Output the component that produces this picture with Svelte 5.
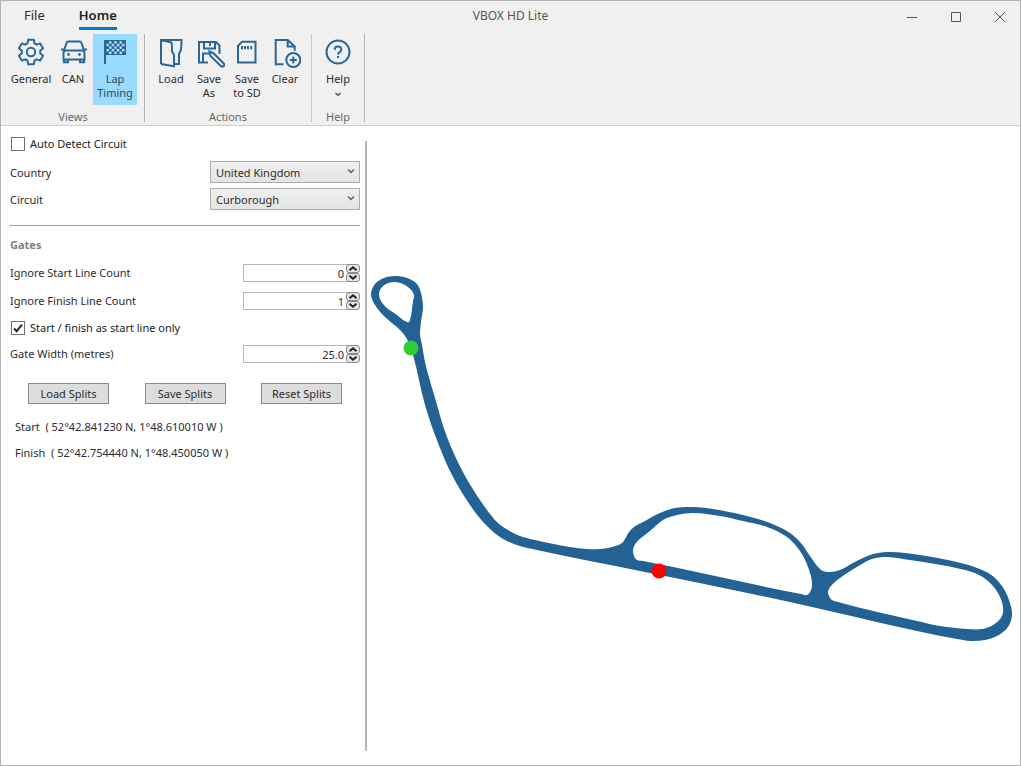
<script>
  let autoDetect = $state(false);
  let startOnly = $state(true);
  let country = $state('United Kingdom');
  let circuit = $state('Curborough');
  let ignoreStart = $state('0');
  let ignoreFinish = $state('1');
  let gateWidth = $state('25.0');
  let activeView = $state('lap');

  const start = { x: 411, y: 348, label: '52°42.841230 N, 1°48.610010 W' };
  const finish = { x: 659, y: 571, label: '52°42.754440 N, 1°48.450050 W' };

  const outer = [
    [371, 294], [375, 284], [384, 278], [395, 276], [407, 278], [417, 284], [421, 293], [423, 307],
    [421, 322], [420, 334], [422, 345], [425, 362], [435, 398], [447, 437], [464, 474], [482, 503],
    [490, 514], [498, 523], [508, 530], [520, 536], [535, 540], [570, 547], [587, 549], [600, 549],
    [612, 547], [622, 543], [625, 539], [629, 532], [634, 527], [643, 522], [660, 513], [675, 508],
    [693, 507], [713, 509], [743, 515], [770, 523], [790, 533], [800, 542], [810, 556], [819, 568],
    [823, 571], [830, 572], [840, 570], [853, 563], [870, 555], [878, 553], [889, 552], [905, 553],
    [965, 564], [977, 568], [990, 574], [1002, 586], [1009, 600], [1012, 615], [1008, 627], [997, 636],
    [985, 640], [971, 641], [957, 639], [917, 631], [790, 602], [640, 571], [537, 550], [520, 546],
    [503, 539], [489, 528], [478, 516], [468, 502], [452, 475], [438, 443], [425, 405], [413, 355],
    [408, 341], [401, 331], [385, 317], [375, 305]
  ];

  const loops = [
    [
      [379, 294], [383, 286], [395, 282], [408, 287], [414, 295], [413, 301], [410, 320], [409, 322],
      [407, 322], [397, 315], [383, 304]
    ],
    [
      [637, 560], [634, 556], [633, 550], [636, 543], [650, 531], [663, 520], [677, 515], [693, 513],
      [720, 516], [743, 521], [767, 527], [787, 537], [800, 551], [808, 567], [812, 583], [811, 590],
      [807, 595], [801, 594], [643, 561]
    ],
    [
      [832, 600], [829, 596], [828, 592], [831, 586], [840, 578], [857, 567], [872, 559], [887, 557],
      [903, 559], [965, 570], [977, 574], [988, 581], [998, 593], [1003, 607], [1002, 616], [993, 625],
      [982, 629], [967, 629], [940, 626], [917, 621], [838, 602]
    ]
  ];

  function unit(a, b) {
    const len = Math.hypot(b[0] - a[0], b[1] - a[1]);
    return [(b[0] - a[0]) / len, (b[1] - a[1]) / len];
  }

  // closed curve through all points, handles bisect the two neighbouring chords
  function smooth(points) {
    const n = points.length;
    const dir = points.map((p, i) => {
      const u = unit(points[(i + n - 1) % n], p);
      const v = unit(p, points[(i + 1) % n]);
      return unit([0, 0], [u[0] + v[0], u[1] + v[1]]);
    });
    let d = `M${points[0]}`;
    points.forEach((p, i) => {
      const j = (i + 1) % n;
      const q = points[j];
      const h = Math.hypot(q[0] - p[0], q[1] - p[1]) / 3;
      d += `C${p[0] + dir[i][0] * h},${p[1] + dir[i][1] * h} ${q[0] - dir[j][0] * h},${q[1] - dir[j][1] * h} ${q}`;
    });
    return d + 'Z';
  }

  const trackPath = [outer, ...loops].map(smooth).join('');

  function gear() {
    const pts = [];
    for (let i = 0; i < 6; i++) {
      for (const [off, r] of [[-22, 9.3], [-13, 12.6], [13, 12.6], [22, 9.3]]) {
        const a = ((i * 60 - 90 + off) * Math.PI) / 180;
        pts.push(`${16 + r * Math.cos(a)} ${16 + r * Math.sin(a)}`);
      }
    }
    return `M${pts.join('L')}Z`;
  }

  const checks = [];
  for (let r = 0; r < 5; r++) {
    for (let c = 0; c < 7; c++) {
      if ((r + c) % 2 === 1) checks.push([7.5 + c * 2.6, 5.2 + r * 2.6]);
    }
  }

  function step(value, by) {
    return String(Math.max(0, Number(value) + by));
  }
  function stepWidth(by) {
    gateWidth = Math.max(0, Number(gateWidth) + by).toFixed(1);
  }
</script>

{#snippet spinner(name, up, down)}
  <span class="spin">
    <button aria-label="Increase {name}" onclick={up}>
      <svg viewBox="0 0 12 7"><path d="M2.5 5.2 6 2.2l3.5 3" /></svg>
    </button>
    <button aria-label="Decrease {name}" onclick={down}>
      <svg viewBox="0 0 12 7"><path d="M2.5 1.8 6 4.8l3.5-3" /></svg>
    </button>
  </span>
{/snippet}

<div class="window">
  <header>
    <div class="titlebar">
      <nav>
        <button class="tab">File</button>
        <button class="tab current">Home</button>
      </nav>
      <h1>VBOX HD Lite</h1>
      <div class="controls">
        <button aria-label="Minimise"><svg viewBox="0 0 12 12"><path d="M1 6.5h10" /></svg></button>
        <button aria-label="Maximise"><svg viewBox="0 0 12 12"><path d="M1.5 1.5h9v9h-9z" /></svg></button>
        <button aria-label="Close"><svg viewBox="0 0 12 12"><path d="M1 1l10 10M11 1 1 11" /></svg></button>
      </div>
    </div>

    <div class="ribbon">
      <section class="group views">
        <div class="tools">
          <button class="tool" class:active={activeView === 'general'} onclick={() => (activeView = 'general')}>
            <svg viewBox="0 0 32 32"><path d={gear()} stroke-linejoin="round" /><circle cx="16" cy="16" r="4.2" /></svg>
            General
          </button>
          <button class="tool can" class:active={activeView === 'can'} onclick={() => (activeView = 'can')}>
            <svg viewBox="0 0 32 32">
              <path d="M7 14.5 9.5 7q.6-1.5 2-1.5h11q1.4 0 2 1.5l2.5 7.5M4 13.5h2.5M27.5 13.5H30M6.5 23.5V17q0-2.5 2.5-2.5h16q2.5 0 2.5 2.5v6.5zM7 23.5v2.7h4v-2.7M23 23.5v2.7h4v-2.7" />
              <circle class="solid" cx="11.5" cy="18.5" r="1.4" />
              <circle class="solid" cx="22.5" cy="18.5" r="1.4" />
            </svg>
            CAN
          </button>
          <button class="tool" class:active={activeView === 'lap'} onclick={() => (activeView = 'lap')}>
            <svg viewBox="0 0 32 32">
              <path d="M6 4v24" />
              <path class="solid" d="M6 4h21v15H6z" />
              {#each checks as [x, y]}
                <rect class="check" {x} {y} width="2.4" height="2.4" />
              {/each}
            </svg>
            Lap<br />Timing
          </button>
        </div>
        <h2>Views</h2>
      </section>

      <section class="group">
        <div class="tools">
          <button class="tool">
            <svg viewBox="0 0 32 32">
              <path d="M6 28V4h20.5q0 9-1.2 11.5Q24 17 24 18.5V28h-5M6 4l10.5 2.5Q17 8 17 15q.2 1.5 1.2 2.2.8.6.8 2.3v10.7L6 28" />
            </svg>
            Load
          </button>
          <button class="tool">
            <svg viewBox="0 0 32 32">
              <path d="M15 26.5H6V6h17l3.5 3.5V18M11 6v6.500h11V6M17 7v3M10 26V17.500h6" />
              <path d="M16.5 15.5l1 4.5L28 30.2q1.500 1 2.700-.2 1.100-1.200 0-2.500L20.500 17.200z" />
            </svg>
            Save<br />As
          </button>
          <button class="tool">
            <svg viewBox="0 0 32 32">
              <path d="M11 5.8h13.5v20.7H7V10zM11 10v3.3M14 10v3.3M17 10v3.3M20.2 10v3.3" />
            </svg>
            Save<br />to SD
          </button>
          <button class="tool">
            <svg viewBox="0 0 32 32">
              <path d="M14.5 28.3H6.7V4h12l7 6.5v4.2M18.7 4v6.5h7" />
              <circle cx="24.3" cy="24" r="7" />
              <path d="M20.8 24h7M24.3 20.5v7" />
            </svg>
            Clear
          </button>
        </div>
        <h2>Actions</h2>
      </section>

      <section class="group">
        <div class="tools">
          <button class="tool">
            <svg viewBox="0 0 32 32">
              <circle cx="16" cy="16" r="11.5" />
              <path d="M12.7 13.8q0-3.3 3.3-3.3t3.3 2.9q0 1.5-1.800 2.700Q16 17.100 16 18.500M16 20v2" />
            </svg>
            Help
            <svg class="more" viewBox="0 0 8 8"><path d="M1.5 3 4 5.2 6.5 3" /></svg>
          </button>
        </div>
        <h2>Help</h2>
      </section>
    </div>
  </header>

  <main>
    <aside>
      <label class="row check-row">
        <input type="checkbox" bind:checked={autoDetect} />
        Auto Detect Circuit
      </label>
      <div class="row country">
        <label for="country">Country</label>
        <span class="combo">
          <select id="country" bind:value={country}>
            <option>United Kingdom</option>
          </select>
          <svg viewBox="0 0 8 8"><path d="M1 2.5 4 5.5 7 2.5" /></svg>
        </span>
      </div>
      <div class="row circuit">
        <label for="circuit">Circuit</label>
        <span class="combo">
          <select id="circuit" bind:value={circuit}>
            <option>Curborough</option>
          </select>
          <svg viewBox="0 0 8 8"><path d="M1 2.5 4 5.5 7 2.5" /></svg>
        </span>
      </div>
      <hr />

      <h3>Gates</h3>
      <div class="row">
        <label for="ignore-start">Ignore Start Line Count</label>
        <span class="number">
          <input id="ignore-start" type="text" inputmode="numeric" bind:value={ignoreStart} />
          {@render spinner('start line count', () => (ignoreStart = step(ignoreStart, 1)), () => (ignoreStart = step(ignoreStart, -1)))}
        </span>
      </div>
      <div class="row">
        <label for="ignore-finish">Ignore Finish Line Count</label>
        <span class="number">
          <input id="ignore-finish" type="text" inputmode="numeric" bind:value={ignoreFinish} />
          {@render spinner('finish line count', () => (ignoreFinish = step(ignoreFinish, 1)), () => (ignoreFinish = step(ignoreFinish, -1)))}
        </span>
      </div>
      <label class="row check-row start-only">
        <input type="checkbox" bind:checked={startOnly} />
        Start / finish as start line only
      </label>
      <div class="row gate-width">
        <label for="gate-width">Gate Width (metres)</label>
        <span class="number">
          <input id="gate-width" type="text" inputmode="decimal" bind:value={gateWidth} />
          {@render spinner('gate width', () => stepWidth(0.5), () => stepWidth(-0.5))}
        </span>
      </div>

      <div class="splits">
        <button>Load Splits</button>
        <button>Save Splits</button>
        <button>Reset Splits</button>
      </div>

      <p>Start&nbsp; ( {start.label} )</p>
      <p>Finish&nbsp; ( {finish.label} )</p>
    </aside>

    <div class="map">
      <svg viewBox="367 126 653 639" role="img" aria-label="{circuit} circuit map">
        <path class="track" d={trackPath} />
        <circle cx={start.x} cy={start.y} r="7.5" fill="#32cd32" />
        <circle cx={finish.x} cy={finish.y} r="7.5" fill="#ff0000" />
      </svg>
    </div>
  </main>
</div>

<style>
  :global(body) {
    margin: 0;
  }
  .window {
    box-sizing: border-box;
    min-height: 100vh;
    display: flex;
    flex-direction: column;
    border: 1px solid #b4b4b4;
    background: #fff;
    color: #2c2c2c;
    font: 11px/16px "Noto Sans", "Open Sans", sans-serif;
  }
  button,
  input,
  select {
    font: inherit;
    color: inherit;
  }
  button {
    padding: 0;
    border: 0;
    background: none;
  }
  svg {
    fill: none;
    stroke: currentColor;
  }

  /* Title bar and ribbon */
  header {
    background: #f0f0f0;
    border-bottom: 1px solid #cfcfcf;
  }
  .titlebar {
    display: grid;
    grid-template-columns: 1fr auto 1fr;
    height: 33px;
  }
  nav {
    display: flex;
    align-items: flex-start;
    gap: 33px;
    padding-left: 22px;
  }
  .tab {
    height: 29px;
    padding: 2px 1px 0;
    font-size: 13px;
    border-bottom: 3px solid transparent;
  }
  .tab.current {
    padding: 2px 0 0;
    font-weight: 600;
    color: #222;
    border-color: #0a78cc;
  }
  h1 {
    margin: 0;
    font-size: 12px;
    line-height: 30px;
    font-weight: 400;
    color: #555;
  }
  .controls {
    display: flex;
    justify-content: flex-end;
  }
  .controls button {
    width: 44px;
    height: 30px;
    color: #555;
  }
  .controls button:last-child {
    margin-right: -2px;
  }
  .controls svg {
    width: 12px;
    height: 12px;
    vertical-align: middle;
  }
  .ribbon {
    display: flex;
    height: 91px;
  }
  .group {
    padding: 0 7px;
    border-right: 1px solid #c8c8cc;
    height: 88px;
  }
  .group.views {
    padding-left: 8px;
    border-color: #b4b4b8;
  }
  .group:last-child {
    border-color: #b4b4b8;
  }
  .tools {
    display: flex;
    height: 71px;
  }
  .tool {
    display: flex;
    flex-direction: column;
    align-items: center;
    width: 38px;
    padding-top: 2px;
    line-height: 14px;
    white-space: nowrap;
    text-align: center;
  }
  .views .tool {
    width: 44px;
  }
  .views .can {
    width: 40px;
  }
  .tool.active {
    background: #99dbff;
    color: #2d4a5c;
  }
  .tool svg {
    width: 32px;
    height: 32px;
    margin-bottom: 4px;
    flex: none;
    stroke: #2a6797;
    stroke-width: 2;
  }
  .tool .solid {
    fill: #2a6797;
    stroke: none;
  }
  .tool .check {
    fill: #b4e2fb;
    stroke: none;
  }
  .tool svg.more {
    width: 8px;
    height: 8px;
    margin-top: 4px;
    stroke: #555;
    stroke-width: 1.5;
  }
  h2 {
    margin: 4px 0 0;
    font-size: 11px;
    line-height: 16px;
    font-weight: 400;
    text-align: center;
    color: #666;
  }

  /* Settings panel */
  main {
    flex: 1;
    display: flex;
  }
  aside {
    flex: none;
    width: 350px;
    padding: 8px 5px 8px 9px;
  }
  .row {
    display: flex;
    align-items: center;
    justify-content: space-between;
    height: 20px;
    margin-top: 8px;
  }
  .check-row {
    justify-content: flex-start;
    gap: 5px;
    margin-top: 0;
    color: #222;
  }
  .start-only {
    margin-top: 7px;
  }
  .gate-width {
    margin-top: 6px;
  }
  input[type='checkbox'] {
    appearance: none;
    box-sizing: border-box;
    width: 14px;
    height: 14px;
    margin: 0 0 0 1px;
    border: 1px solid #707070;
    background: #fff;
  }
  input[type='checkbox']:checked {
    background: #fff url("data:image/svg+xml,%3Csvg xmlns='http://www.w3.org/2000/svg' viewBox='0 0 12 12'%3E%3Cpath d='M2 6.5 4.7 9.2 10 2.5' fill='none' stroke='%23222' stroke-width='2'/%3E%3C/svg%3E");
  }
  .row.country {
    height: 22px;
    margin-top: 7px;
  }
  .row.circuit {
    height: 22px;
    margin-top: 5px;
  }
  .combo {
    position: relative;
    width: 150px;
    height: 22px;
  }
  select {
    appearance: none;
    width: 100%;
    height: 22px;
    padding: 1px 20px 0 5px;
    border: 1px solid #acacac;
    border-radius: 0;
    background: linear-gradient(#f0f0f0, #e4e4e4);
  }
  .combo svg {
    position: absolute;
    right: 5px;
    top: 6px;
    width: 8px;
    height: 8px;
    stroke: #606060;
    stroke-width: 1.5;
    pointer-events: none;
  }
  .country label,
  .circuit label {
    padding-top: 2px;
  }
  hr {
    margin: 15px 0 0;
    border: 0;
    height: 1px;
    background: #a0a0a0;
  }
  h3 {
    margin: 9px 0 8px;
    font-size: 11px;
    line-height: 20px;
    font-weight: 700;
    color: #808080;
  }
  h3 + .row {
    margin-top: 0;
  }
  .number {
    display: flex;
    align-items: center;
  }
  .number input {
    box-sizing: border-box;
    width: 105px;
    height: 18px;
    padding: 0 3px;
    border: 1px solid #b4b8bc;
    text-align: right;
  }
  .spin {
    display: flex;
    flex-direction: column;
    width: 14px;
    margin-left: -2px;
  }
  .spin button {
    height: 9px;
    border: 1px solid #8a8a8a;
    border-radius: 3px;
    background: #e4e4e4;
    line-height: 0;
  }
  .spin svg {
    width: 12px;
    height: 7px;
    stroke: #222;
    stroke-width: 2;
  }
  .splits {
    display: flex;
    justify-content: space-between;
    padding: 0 18px;
    margin: 19px 0 13px;
  }
  .splits button {
    width: 81px;
    height: 21px;
    border: 1px solid #8a8a8a;
    background: #ddd;
  }
  p {
    margin: 0 0 6px 5px;
    line-height: 20px;
    white-space: nowrap;
  }

  /* Circuit map */
  .map {
    flex: 1;
    min-width: 0;
    display: flex;
  }
  .map::before {
    content: '';
    width: 2px;
    margin: 15px 0 14px;
    background: #b4b4b4;
    flex: none;
  }
  .map svg {
    flex: 1;
    width: 100%;
    min-width: 0;
    stroke: none;
  }
  .track {
    fill: #246294;
    fill-rule: evenodd;
  }
</style>
